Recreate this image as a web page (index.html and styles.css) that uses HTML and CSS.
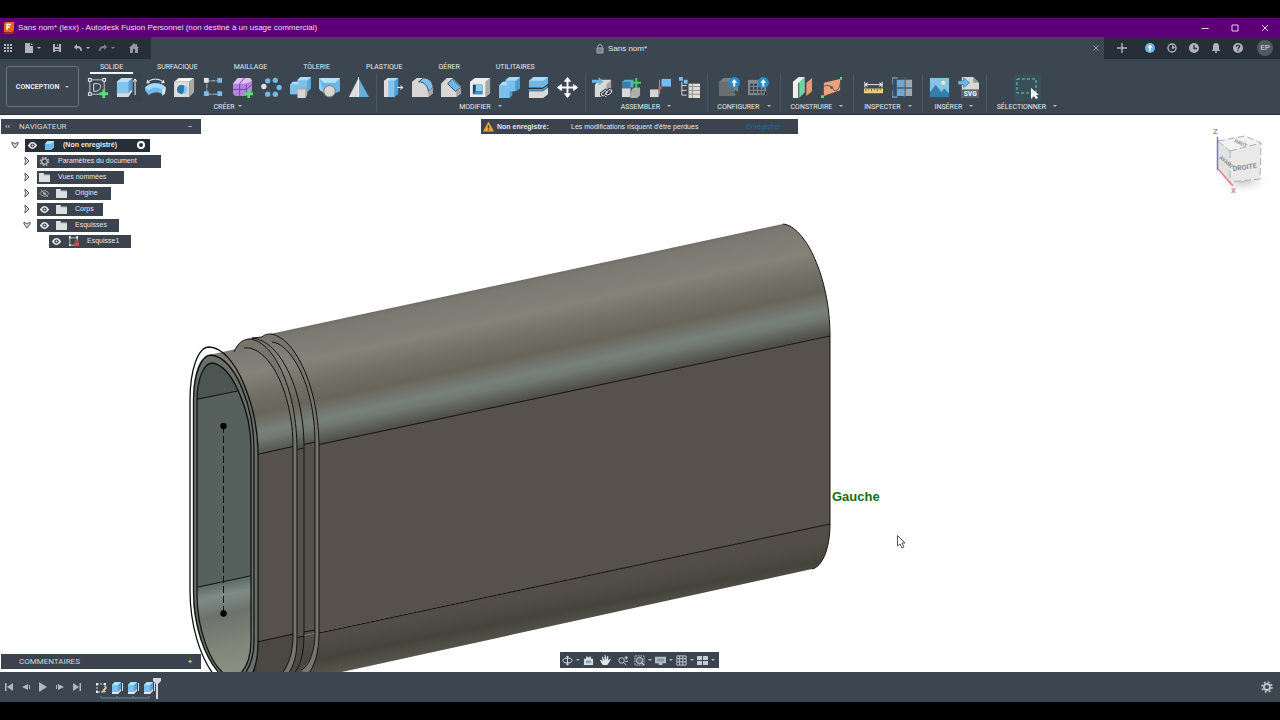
FILE: index.html
```html
<!DOCTYPE html>
<html lang="fr">
<head>
<meta charset="utf-8">
<title>Autodesk Fusion Personnel</title>
<link rel="stylesheet" href="styles.css">
</head>
<body>
<div class="app">
<header class="titlebar">
  <svg class="logo" viewBox="0 0 10 12"><path d="M0 1l2-1h8v10l-2 2H0z" fill="#e8641b"/><path d="M0 10h8l2-2v2l-2 2H0z" fill="#8c3410"/><path d="M3 8V2.500h4M3 5h3" fill="none" stroke="#fff" stroke-width="1.300"/></svg>
  <span class="title">Sans nom* (lexx) - Autodesk Fusion Personnel (non destiné à un usage commercial)</span>
  <div class="window-buttons">
    <button aria-label="Réduire"><svg viewBox="0 0 8 8"><path d="M.5 4.500h7"/></svg></button>
    <button aria-label="Agrandir"><svg viewBox="0 0 8 8"><path d="M1 1h6v6H1z"/></svg></button>
    <button aria-label="Fermer"><svg viewBox="0 0 8 8"><path d="M1 1l6 6M7 1L1 7"/></svg></button>
  </div>
</header>

<div class="tabstrip">
  <div class="quick">
    <button aria-label="Données"><svg viewBox="0 0 10 10"><path d="M1 1h2v2H1zM4 1h2v2H4zM7 1h2v2H7zM1 4h2v2H1zM4 4h2v2H4zM7 4h2v2H7zM1 7h2v2H1zM4 7h2v2H4zM7 7h2v2H7z"/></svg></button>
    <button aria-label="Fichier"><svg viewBox="0 0 10 10"><path d="M1 0h5v3h3v7H1zM7 0l2 2H7z"/></svg><i class="caret"></i></button>
    <button aria-label="Enregistrer le fichier"><svg viewBox="0 0 10 10"><path d="M1 1h8v8H1zM3 1v3h4V1zM3 6v3h4V6z" fill-rule="evenodd"/><path d="M5 1.500h1V3H5zM3 7h4v1H3z"/></svg></button>
    <button aria-label="Annuler"><svg viewBox="0 0 10 10"><path d="M4 1v2c3 0 5 1 5 5H7.500C7.500 6 6.500 5 4 5v2L1 4z"/></svg><i class="caret"></i></button>
    <button class="dim" aria-label="Rétablir"><svg viewBox="0 0 10 10"><path d="M6 1v2C3 3 1 4 1 8h1.500C2.500 6 3.500 5 6 5v2l3-3z"/></svg><i class="caret"></i></button>
    <button class="home" aria-label="Accueil"><svg viewBox="0 0 10 10"><path d="M5 0L0 5h1v5h3V6h2v4h3V5h1L8 3V1H7v1z"/></svg></button>
  </div>
  <div class="doc-tab">
    <span class="doc-name"><svg viewBox="0 0 8 10"><path d="M1 4h6v5H1z" fill="#777f86"/><path d="M2 4V2.500a2 2 0 0 1 4 0V4M1 4h6v5H1z" fill="none" stroke="#a4aab0"/></svg>Sans nom*</span>
    <button class="close" aria-label="Fermer le document"><svg viewBox="0 0 8 8"><path d="M1.500 1.500l5 5M6.500 1.500l-5 5" stroke="#969da4"/></svg></button>
  </div>
  <div class="account">
    <button class="plus" aria-label="Nouveau"><svg viewBox="0 0 10 10"><path d="M4.300 0h1.400v4.300H10v1.400H5.700V10H4.300V5.700H0V4.300h4.300z"/></svg></button>
    <button aria-label="Extensions"><svg viewBox="0 0 10 10"><circle cx="5" cy="5" r="5" fill="#6bb5e6"/><path d="M5 1.500L2.500 4.500h1.800V8.500h1.400V4.500h1.800z" fill="#fff"/></svg></button>
    <button aria-label="Actualiser"><svg viewBox="0 0 10 10"><circle cx="5" cy="5" r="4" fill="none" stroke="#aeb4ba" stroke-width="1.400"/><path d="M4.500 5.500l1-3.500L8 4.500 6 6z"/></svg></button>
    <button aria-label="Historique"><svg viewBox="0 0 10 10"><circle cx="5" cy="5" r="5"/><path d="M5 2v3.500h3" fill="none" stroke="#30383f" stroke-width="1.300"/></svg></button>
    <button aria-label="Notifications"><svg viewBox="0 0 10 10"><path d="M5 0c2 0 3 1.500 3 3.500V6l1.500 2H.5L2 6V3.500C2 1.500 3 0 5 0zM4 8.500h2V10H4z"/></svg></button>
    <button aria-label="Aide"><svg viewBox="0 0 10 10"><circle cx="5" cy="5" r="5"/><path d="M3.300 4c0-2.500 3.400-2.300 3.400-.4C6.700 4.800 5 4.800 5 6.200M5 7v1.300" fill="none" stroke="#262f38" stroke-width="1.300"/></svg></button>
    <button class="avatar">EP</button>
  </div>
</div>

<div class="ribbon">
  <button class="workspace">CONCEPTION <i class="caret"></i></button>
  <div class="ribbon-body">
    <nav class="tabs">
      <button class="active">SOLIDE</button><button>SURFACIQUE</button><button>MAILLAGE</button><button>TÔLERIE</button><button>PLASTIQUE</button><button>GÉRER</button><button>UTILITAIRES</button>
    </nav>
    <div class="groups">
      <section class="group">
        <div class="tools">
          <button aria-label="Créer une esquisse"><svg viewBox="0 0 22 22"><path d="M3 3h15v15H3z" fill="none" stroke="#c8cdd1"/><path d="M1 1h4v4H1zM16 1h4v4h-4zM1 16h4v4H1z" fill="#e4e7e9"/><path d="M2 2h2v2H2zM17 2h2v2h-2zM2 17h2v2H2z" fill="#4a545d"/><path d="M7 15V7h4c4 0 4 4 2 6s-3 2-6 2" fill="none" stroke="#e4e7e9"/><path d="M16 13h3v3h3v3h-3v3h-3v-3h-3v-3h3z" fill="#57dc72"/></svg></button>
          <button class="hot" aria-label="Extrusion"><svg viewBox="0 0 22 22"><path d="M1 5l5-4h11v14l-4 6H1z" fill="#d8dadb"/><path d="M1 5h12v12H1z" fill="#83c5f1"/><path d="M1 5l5-4h11l-4 4z" fill="#b9e0f8"/><path d="M13 5l4-4v12l-4 4z" fill="#4b9bd2"/><path d="M20 19V3M18 5l2-3 2 3" fill="none" stroke="#fff"/></svg></button>
          <button aria-label="Révolution"><svg viewBox="0 0 22 22"><path d="M0 11c5-6 17-6 22 0l-3 8c-4-4-10-4-15 0l-4-5z" fill="#70b9e9"/><path d="M0 11c5-6 17-6 22 0l-4 3c-4-4-10-4-14 0z" fill="#a2d8f8"/><path d="M18 14l4-3-1 6-3 3z" fill="#e4e4e4"/><path d="M2 6c5-5 13-5 18 0M2 6l1-3M2 6h3M20 6l-1-3M20 6h-3" fill="none" stroke="#fff"/></svg></button>
          <button aria-label="Perçage"><svg viewBox="0 0 22 22"><path d="M0 5l5-4h16l-5 4z" fill="#f3f3f2"/><path d="M0 5h16v16H0z" fill="#dad9d7"/><path d="M16 5l5-4v15l-5 5z" fill="#aaa9a7"/><circle cx="8" cy="13" r="5.500" fill="#2e79aa" stroke="#fff"/><path d="M10 8a5 5 0 0 1-2 10c3-2 3-6 2-10z" fill="#82c6ee"/></svg></button>
          <button aria-label="Réseau"><svg viewBox="0 0 22 22"><path d="M4 18V4h13M4 18h13" fill="none" stroke="#b9c1c6" stroke-dasharray="5 1"/><path d="M1 1h5v5H1z" fill="#e3e3e3"/><path d="M15 1h5v5h-5zM1 15h5v5H1zM15 15h5v5h-5z" fill="#79bce8"/></svg></button>
          <button aria-label="Forme libre"><svg viewBox="0 0 22 22"><path d="M1 7l5-6h13l2 3v11l-6 5H3l-2-3z" fill="#b383df"/><path d="M1 7l5-6h13l2 3-6 3z" fill="#dfbdf7"/><path d="M15 7v13M1 13h14l6-5M8 20V7l5-6" fill="none" stroke="#7846a3"/><path d="M16 13h3v3h3v3h-3v3h-3v-3h-3v-3h3z" fill="#57dc72"/></svg></button>
          <button aria-label="Réseau circulaire"><svg viewBox="0 0 22 22"><g fill="#73b8e5"><circle cx="7" cy="4" r="2.800"/><circle cx="15" cy="3.500" r="2.800"/><circle cx="19" cy="11" r="2.800"/><circle cx="15" cy="18" r="2.800"/><circle cx="7" cy="18" r="2.800"/></g><circle cx="3" cy="10" r="2.800" fill="#e0e0df"/></svg></button>
          <button aria-label="Bossage"><svg viewBox="0 0 22 22"><path d="M0 8l3-3h5V3l3-3h11v12l-4 4H8v2H0z" fill="#55a7dc"/><path d="M0 8l3-3h5V3l3-3h11l-4 4H9v4z" fill="#acddf9"/><path d="M0 8h9V4h9v12H8v2H0z" fill="#7cc0ec"/><path d="M8 13l2-2h8v8l-2 3H8z" fill="#aaa9a6"/><path d="M8 13h8v9H8z" fill="#d7d6d3"/></svg></button>
          <button aria-label="Nervure"><svg viewBox="0 0 22 22"><path d="M0 1h22v14l-5 2H5l-5-5z" fill="#6cb6e7"/><path d="M0 1h22l-5 5H5z" fill="#b8e2fb"/><path d="M0 1l5 14H2l-2-3z" fill="#94d0f5"/><circle cx="11" cy="15" r="6" fill="#d7d6d3" stroke="#777"/></svg></button>
          <button aria-label="Symétrie"><svg viewBox="0 0 22 22"><path d="M11 1v20H1z" fill="#ddddda"/><path d="M11 1v20h11z" fill="#65afe0"/><path d="M11 0v21" stroke="#f7f7f7"/></svg></button>
        </div>
        <button class="label">CRÉER <i class="caret"></i></button>
      </section>
      <section class="group">
        <div class="tools">
          <button aria-label="Appuyer/Tirer"><svg viewBox="0 0 22 22"><path d="M1 4l4-3h5v17l-4 3H1z" fill="#ddd"/><path d="M6 4l4-3h6v17l-4 3H6z" fill="#4d9dd4"/><path d="M6 4h6v17H6z" fill="#80c4f1"/><path d="M6 4l4-3h6l-4 3z" fill="#b2e0fa"/><path d="M15 11h6M18 9l3 2-3 2" stroke="#fff" fill="none"/></svg></button>
          <button aria-label="Congé"><svg viewBox="0 0 22 22"><path d="M0 5l5-4h8c6 0 9 6 9 10v6l-5 4H0z" fill="#d7d6d4"/><path d="M12 1c6 0 10 5 10 10l-5 4c0-5-4-10-10-10z" fill="#7bc1ef" stroke="#334958"/><path d="M17 15l5-4v6l-5 4z" fill="#a6a5a2"/></svg></button>
          <button aria-label="Chanfrein"><svg viewBox="0 0 22 22"><path d="M0 7l6-6h6l9 9v7l-5 4H0z" fill="#d8d7d5"/><path d="M12 2l9 9-6 4-8-8z" fill="#70b7ea" stroke="#334958"/><path d="M16 15l5-4v6l-5 4z" fill="#a6a5a2"/></svg></button>
          <button aria-label="Coque"><svg viewBox="0 0 22 22"><path d="M0 5l5-4h16v16l-5 4H0z" fill="#edeceb"/><path d="M16 5l5-4v16l-5 4z" fill="#aaa9a6"/><path d="M3 8h10v10H3z" fill="#17486e"/><path d="M6 8h7v7H6z" fill="#8dccf2"/><path d="M3 18l3-3h7v3z" fill="#438ec1"/></svg></button>
          <button aria-label="Combiner"><svg viewBox="0 0 22 22"><path d="M0 9l4-4h3V3l4-3h11v12l-4 3h-4v4l-3 3H0z" fill="#4a9cd3"/><path d="M0 9h7V4h10v11h-6v7H0z" fill="#7bc0ec"/><path d="M0 9l4-4h3V3l4-3h11l-4 4H8v5z" fill="#abdcf9"/></svg></button>
          <button aria-label="Fractionner"><svg viewBox="0 0 22 22"><path d="M1 4l5-4h15v7l-5 4H1z" fill="#70b7e6"/><path d="M1 4l5-4h15l-5 4z" fill="#a8dcf9"/><path d="M0 12h15l6-4v3l-5 4H0z" fill="#4d9acf" stroke="#25313b"/><path d="M1 15h15l5-4v7l-5 4H1z" fill="#dbdad8"/></svg></button>
          <button aria-label="Déplacer"><svg viewBox="0 0 22 22"><path d="M11 1v20M1 11h20" stroke="#fff" stroke-width="2"/><path d="M11 0l4 5H7zM11 22l-4-5h8zM0 11l5-4v8zM22 11l-5-4v8z" fill="#fff"/></svg></button>
        </div>
        <button class="label">MODIFIER &nbsp; <i class="caret"></i></button>
      </section>
      <section class="group">
        <div class="tools">
          <button aria-label="Insérer un composant"><svg viewBox="0 0 22 22"><path d="M3 8l5-5h12v13l-5 5H3z" fill="#dad9d7"/><path d="M15 8l5-5v13l-5 5z" fill="#a4a39f"/><path d="M0 3h7V0l5 5-5 4V6H0z" fill="#68b5e7"/><path d="M10 17l4-3 2 2-4 4-2-1zM14 17l4-4 3 1-1 3-4 2z" fill="none" stroke="#2d3640" stroke-width="3"/><path d="M10 17l4-3 2 2-4 4-2-1zM14 17l4-4 3 1-1 3-4 2z" fill="none" stroke="#fff"/></svg></button>
          <button aria-label="Nouveau composant"><svg viewBox="0 0 22 22"><path d="M1 5l3-2h9v8H1z" fill="#60abd9"/><path d="M1 11h9v10H1z" fill="#dadad8"/><path d="M11 13l3-2h6v8l-3 3h-7z" fill="#b0afad"/><path d="M1 5h9v7H1z" fill="#397eac"/><path d="M16 1v10M11 6h10" stroke="#39d663" stroke-width="2"/></svg></button>
          <button aria-label="Liaison"><svg viewBox="0 0 22 22"><path d="M0 13h9v8H0z" fill="#d7d5d2"/><path d="M12 2h10v8H12z" fill="#75bcee"/><path d="M10 3v15" stroke="#9aa0a3"/><path d="M9 10h3v3H9z" fill="#ec5860"/></svg></button>
          <button aria-label="Nomenclature"><svg viewBox="0 0 22 22"><path d="M0 0h4v4H0zM5 3h4v4H5z" fill="#7abceb"/><path d="M3 5v14h5M3 9h5M3 14h5" fill="none" stroke="#ddd"/><path d="M10 7h12v15H10z" fill="#deddda"/><path d="M10 10h12M10 14h12M10 18h12M14 7v15" stroke="#8c9092"/></svg></button>
        </div>
        <button class="label">ASSEMBLER &nbsp; <i class="caret"></i></button>
      </section>
      <section class="group wide">
        <div class="tools">
          <button aria-label="Configurer"><svg viewBox="0 0 22 22"><path d="M0 5l5-4h15v15l-4 4H0z" fill="#7d8184"/><path d="M0 5h16v15H0z" fill="#696e72"/><path d="M13 16h7M17 14l3 2-3 2" stroke="#4d5860"/><circle cx="16" cy="6" r="6" fill="#258dce"/><path d="M16 2l-3 4h2v4h2V6h2z" fill="#fff"/></svg></button>
          <button aria-label="Table de configuration"><svg viewBox="0 0 22 22"><path d="M0 3h19v16H0z" fill="#858b90"/><path d="M2 7h15v10H2z" fill="#3d4751"/><path d="M2 10h15M2 14h15M6 7v10M10 7v10M14 7v10" stroke="#8b9196"/><path d="M12 18h9M18 15l3 3-3 2" stroke="#59636b"/><circle cx="16" cy="6" r="6" fill="#258dce"/><path d="M16 2l-3 4h2v4h2V6h2z" fill="#fff"/></svg></button>
        </div>
        <button class="label">CONFIGURER &nbsp; <i class="caret"></i></button>
      </section>
      <section class="group wide">
        <div class="tools">
          <button aria-label="Plan de décalage"><svg viewBox="0 0 22 22"><path d="M1 5l6-5h6v16l-6 6H1z" fill="#efefec"/><path d="M7 6l6-6v16l-6 6z" fill="#6ad7a0"/><path d="M7 6v16" stroke="#25594a"/><path d="M15 6l6-5v14l-6 5z" fill="#e59a70"/></svg></button>
          <button aria-label="Plan le long d'un chemin"><svg viewBox="0 0 22 22"><path d="M3 6l17-4v12L3 20z" fill="#e9a27c"/><path d="M1 20C1 2 12 10 13 13s7 2 8-11" fill="none" stroke="#55504b"/><path d="M0 19h3v3H0zM20 0h2v3h-2z" fill="#65dc7a"/><circle cx="11" cy="11" r="1.500" fill="#347a45"/></svg></button>
        </div>
        <button class="label">CONSTRUIRE &nbsp; <i class="caret"></i></button>
      </section>
      <section class="group mid">
        <div class="tools">
          <button aria-label="Mesurer"><svg viewBox="0 0 22 22"><path d="M1 12h20v5H1z" fill="#efd07a"/><path d="M3 12v3M6 12v2M9 12v3M12 12v2M15 12v3M18 12v2" stroke="#705d27"/><path d="M2 8h18M2 5v6M20 5v6M5 6L2 8l3 2M17 6l3 2-3 2" fill="none" stroke="#f3f4f4"/></svg></button>
          <button aria-label="Interférence"><svg viewBox="0 0 22 22"><path d="M5 3h8v8H5zM5 12h8v8H5z" fill="#6fa6cf"/><path d="M13 3h8v8h-8zM13 12h8v8h-8z" fill="#a4a8ac"/><path d="M4 1H2v20h2M11 1h3v20h-3M5 11.500h16" fill="none" stroke="#35699a"/><path d="M0 8V1h6M0 14v7h6" fill="none" stroke="#85bdda"/></svg></button>
        </div>
        <button class="label">INSPECTER &nbsp; <i class="caret"></i></button>
      </section>
      <section class="group">
        <div class="tools">
          <button aria-label="Insérer une image"><svg viewBox="0 0 22 22"><path d="M1 1h20v20H1z" fill="#83c3e8"/><circle cx="15" cy="6" r="2.200" fill="#fff2ae"/><path d="M1 16l6-8 6 8 3-4 5 5v4H1z" fill="#347dac"/></svg></button>
          <button aria-label="Insérer un SVG"><svg viewBox="0 0 22 22"><path d="M4 0h12l6 6v16H4z" fill="#d6d7d7"/><path d="M16 0v6h6z" fill="#91969b"/><path d="M4 13h18v9H4z" fill="#596069"/><path d="M0 4h6V1l6 5-6 5V8H0z" fill="#6bbaec" stroke="#2c526b" stroke-width=".6"/><text x="6" y="20" class="svg-word">SVG</text></svg></button>
        </div>
        <button class="label">INSÉRER &nbsp; <i class="caret"></i></button>
      </section>
      <section class="group last">
        <div class="tools">
          <button class="selected" aria-label="Sélectionner"><svg viewBox="0 0 26 24"><path d="M3 3h19v14H3z" fill="none" stroke="#62ceb0" stroke-dasharray="3 2"/><path d="M17 12v11l3-3 2 3 2-1-2-3h3z" fill="#fff"/></svg></button>
        </div>
        <button class="label">SÉLECTIONNER &nbsp; <i class="caret"></i></button>
      </section>
    </div>
  </div>
</div>

<main class="canvas">
  <svg class="scene" viewBox="0 115 1280 557" preserveAspectRatio="xMinYMin slice">
    <defs>
      <linearGradient id="top" gradientUnits="userSpaceOnUse" x1="0" y1="391" x2="25" y2="507">
        <stop offset="0" stop-color="#6b6b65"/><stop offset=".05" stop-color="#7a7871"/><stop offset=".3" stop-color="#858279"/><stop offset=".5" stop-color="#716e64"/><stop offset=".64" stop-color="#68665b"/><stop offset=".8" stop-color="#78807a"/><stop offset=".86" stop-color="#727973"/><stop offset="1" stop-color="#504f48"/>
      </linearGradient>
      <linearGradient id="low" gradientUnits="userSpaceOnUse" x1="0" y1="700" x2="8" y2="741">
        <stop offset="0" stop-color="#524e47"/><stop offset=".5" stop-color="#45443c"/><stop offset=".85" stop-color="#55544a"/><stop offset="1" stop-color="#6a695f"/>
      </linearGradient>
      <linearGradient id="hole" gradientUnits="userSpaceOnUse" x1="200" y1="584" x2="218" y2="672">
        <stop offset="0" stop-color="#57625f"/><stop offset=".17" stop-color="#7f8b88"/><stop offset=".38" stop-color="#6d736c"/><stop offset=".75" stop-color="#81857a"/><stop offset="1" stop-color="#8b8e83"/>
      </linearGradient>
      <radialGradient id="shade"><stop offset="0" stop-color="#aaa" stop-opacity=".7"/><stop offset="1" stop-color="#fff" stop-opacity="0"/></radialGradient>
      <clipPath id="opening"><path id="open-path" d="M197 400C197 379 204 363 212 363C232 365 251 411 251 448V640C251 655 247 668 239 675H226C210 665 197 628 197 595z"/></clipPath>
      <clipPath id="body"><path d="M262 337L270 334L783 224C805 226 830 277 830 336V524C830 549 822 567 812 569L310 679H283L236 675V352C240 342 246 338 254 338z"/></clipPath>
    </defs>

    <path d="M209 355L236 349L260 380V672H220z" fill="url(#top)"/>
    <g clip-path="url(#body)">
      <path d="M180 200H840V334L180 474z" fill="url(#top)"/>
      <path d="M180 473.500L840 334V522L180 662z" fill="#56524b"/>
      <path d="M180 662L840 522V690H180z" fill="url(#low)"/>
      <path d="M257 454.500L293 446.500L297 449.500L304 448V636L297 637.500L293 634L257 642z" fill="#56524b"/>
      <path d="M257 642L293 634L297 637.500L304 636V676H257z" fill="#4a4840"/>
    </g>
    <path d="M319 444.500L830 336M319 633L830 524M783 224C805 226 830 277 830 336V524C830 549 822 567 812 569" class="edge"/>

    <path d="M262 337C265 334 268 334 271 334C296 338 319 389 319 447V633C319 652 315 666 307 676L301 670C309 664 315 650 315 633V443C315 382 289 343 272 342z" fill="#77756b"/>
    <path d="M262 337C265 334 268 334 271 334C296 338 319 389 319 447V633C319 652 315 666 307 676M272 342C289 343 315 382 315 443V633C315 650 309 667 301 670M252 338C282 341 304 393 304 447V633C304 654 301 665 293 675M252 338L262 337" class="edge"/>
    <path d="M234 352C238 342 244 339 250 339C276 342 297 394 297 449V637C297 654 295 665 287 675H281C289 665 293 652 293 635V447C293 392 270 349 248 347L236 350z" fill="#77756b"/>
    <path d="M234 352C238 342 244 339 250 339C276 342 297 394 297 449V637C297 654 295 665 287 675M244 348C268 345 293 391 293 447V635C293 652 289 665 281 675" class="edge"/>
    <path d="M257 454.500L293 446.500M297 449.500L304 448M304 444.500L315 442M257 642L293 634M297 637.500L304 636M304 632L315 630" class="edge"/>

    <path d="M193 400C193 371 200 355 211 355C238 358 258 409 258 454V642C258 654 256 668 250 675H222C205 660 193 628 193 595z" fill="#68716b"/>
    <use href="#open-path" fill="#56615d"/>
    <g clip-path="url(#opening)">
      <path d="M190 355h70v31L190 401z" fill="#4c5552"/>
      <path d="M190 589L260 574V675H190z" fill="url(#hole)"/>
      <path d="M196 399.500L240 390.500M196 587.500L252 575.500" class="edge"/>
    </g>
    <use href="#open-path" class="edge heavy"/>
    <path d="M190 400C190 370 198 347 209 347C236 348 258 408 258 454V642C258 655 256 666 252 675M190 399V590C190 625 200 657 214 675M193.500 399C194 372 202 355 211 355C236 358 254 408 254 450V642C254 655 250 667 244 675M193.500 399V592C194 625 204 658 221 675" class="edge heavy"/>
    <path d="M223.500 426V613" class="edge axis"/>
    <circle cx="223.500" cy="426" r="3.200"/><circle cx="223.500" cy="613.500" r="3.200"/>

    <text x="832" y="501" class="side-name">Gauche</text>
    <path d="M897.500 535.500v10.500l2.500-2 2 4 2-1-2-4h3z" fill="#fff" stroke="#555"/>

    <ellipse cx="1243" cy="181" rx="29" ry="13" fill="url(#shade)"/>
    <path d="M1218 141L1245 136L1261 143L1260 179L1230 182L1218 170z" fill="#f2f2f2"/>
    <path d="M1218 141L1230 151V182L1218 170z" fill="#e1e2e4"/>
    <path d="M1230 151L1261 143L1260 179L1230 182z" fill="#e9e9e9"/>
    <path d="M1218 141L1245 136L1261 143L1260 179L1230 182M1230 151L1261 143M1230 151V182M1218 141L1230 151" fill="none" stroke="#b0b0b0" stroke-dasharray="7 3"/>
    <path d="M1217.500 137V170" stroke="#7772ce" stroke-width="1.500"/><path d="M1218 169L1233 186" stroke="#df7f85" stroke-width="1.500"/>
    <text x="1213" y="134" class="cube-text z">Z</text><text x="1231" y="193" class="cube-text x">X</text>
    <text transform="translate(1233 171) rotate(-7)" class="cube-text face">DROITE</text>
    <text transform="translate(1234 142) rotate(24)" class="cube-text tiny">HAUT</text>
    <text transform="translate(1219 158) rotate(40)" class="cube-text tiny">AVANT</text>
  </svg>

  <div class="warning">
    <svg viewBox="0 0 12 11"><path d="M6 0l6 11H0z" fill="#efa33d"/><path d="M6 4v3M6 8v1.500" stroke="#343d46" stroke-width="1.500"/></svg>
    <strong>Non enregistré:</strong><span>Les modifications risquent d'être perdues</span><a href="#">Enregistrer</a>
  </div>

  <aside class="side">
    <div class="panel-title"><button aria-label="Replier">‹‹</button><span>NAVIGATEUR</span><button aria-label="Masquer">−</button></div>
    <ul class="tree">
      <li class="root"><button class="twist" aria-label="Replier la racine"><svg viewBox="0 0 8 8"><path d="M1 1l3 2 3-2v2L4 7 1 3z"/></svg></button><div class="node w125"><svg class="eye" viewBox="0 0 12 12"><use href="#eye"/></svg><svg viewBox="0 0 12 12"><path d="M1 4l3-3h7v7l-3 3H1z" fill="#6cb9ea"/><path d="M1 4l3-3h7L8 4z" fill="#b8e2fa"/></svg><b>(Non enregistré)</b><svg class="radio" viewBox="0 0 12 12"><circle cx="6" cy="6" r="3" fill="none" stroke="#fff" stroke-width="2"/></svg></div></li>
      <li><button class="twist" aria-label="Développer"><svg viewBox="0 0 8 8"><use href="#right"/></svg></button><div class="node w124"><svg viewBox="0 0 12 12"><circle cx="6" cy="6" r="3" fill="none" stroke="#aeb5bb" stroke-width="1.500"/><circle cx="6" cy="6" r="4.500" fill="none" stroke="#aeb5bb" stroke-width="1.500" stroke-dasharray="1.800 1.730"/></svg><span class="far">Paramètres du document</span></div></li>
      <li><button class="twist" aria-label="Développer"><svg viewBox="0 0 8 8"><use href="#right"/></svg></button><div class="node w87"><svg viewBox="0 0 12 12"><use href="#folder"/></svg><span class="far">Vues nommées</span></div></li>
      <li><button class="twist" aria-label="Développer"><svg viewBox="0 0 8 8"><use href="#right"/></svg></button><div class="node w74"><svg viewBox="0 0 12 12"><path d="M1 6c3-4 7-4 10 0-3 4-7 4-10 0zM2 2l8 8" fill="none" stroke="#aeb5bb"/><circle cx="6" cy="6" r="1.500" fill="#aeb5bb"/></svg><svg class="second" viewBox="0 0 12 12"><use href="#folder"/></svg><span>Origine</span></div></li>
      <li><button class="twist" aria-label="Développer"><svg viewBox="0 0 8 8"><use href="#right"/></svg></button><div class="node w66"><svg viewBox="0 0 12 12"><use href="#eye"/></svg><svg class="second" viewBox="0 0 12 12"><use href="#folder"/></svg><span>Corps</span></div></li>
      <li><button class="twist" aria-label="Replier"><svg viewBox="0 0 8 8"><path d="M1 1l3 2 3-2v2L4 7 1 3z"/></svg></button><div class="node w82"><svg viewBox="0 0 12 12"><use href="#eye"/></svg><svg class="second" viewBox="0 0 12 12"><use href="#folder"/></svg><span>Esquisses</span></div></li>
      <li class="leaf"><div class="node w82"><svg viewBox="0 0 12 12"><use href="#eye"/></svg><svg class="second" viewBox="0 0 12 12"><path d="M2 1v9h5M2 2h8v4" fill="none" stroke="#c3c8cc"/><path d="M1 0h2v3H1zM9 0h2v3H9zM1 9h2v2H1z" fill="#ddd"/><path d="M7 7h5v4H7z" fill="#d44954"/><path d="M8 7V5h3v2" fill="none" stroke="#d44954"/></svg><span>Esquisse1</span></div></li>
    </ul>
  </aside>
  <div class="panel-title comments"><span>COMMENTAIRES</span><button aria-label="Afficher">+</button></div>

  <div class="viewbar">
    <button aria-label="Orbite"><svg viewBox="0 0 12 12"><path d="M6 1v10" stroke="#d7dde1"/><ellipse cx="6" cy="6" rx="5" ry="2.500" fill="none" stroke="#d7dde1"/><path d="M4 3l2-2 2 2M4 9l2 2 2-2" fill="none" stroke="#d7dde1"/></svg></button><i class="caret"></i>
    <button aria-label="Regarder"><svg viewBox="0 0 12 12"><path d="M1 4h2l1-3 2 2 2-2 1 3h2v7H1z" fill="#d7dde1"/><path d="M3 6h6v3H3z" fill="#82aabf"/></svg></button>
    <button aria-label="Panoramique"><svg viewBox="0 0 12 12"><path d="M3 11L0 6l1-1 2 2-1-5h1l2 4V0h1l1 5 1-4h1v5l2-2h1l-2 4-2 3z" fill="#e0e5e8"/></svg></button>
    <button aria-label="Zoom"><svg viewBox="0 0 12 12"><circle cx="5" cy="6" r="3" fill="none" stroke="#d2d8dc"/><path d="M7 8l3 3M8 3h4M10 1v4M9 7h3" stroke="#d2d8dc"/></svg></button>
    <button aria-label="Ajuster"><svg viewBox="0 0 12 12"><path d="M1 1h10v10H1z" fill="none" stroke="#c5cbd0" stroke-dasharray="2 1"/><circle cx="6" cy="6" r="3.500" fill="#616c75" stroke="#ccd2d6"/><path d="M8 8l3 3" stroke="#fff"/></svg></button><i class="caret"></i>
    <button aria-label="Affichage"><svg viewBox="0 0 12 12"><path d="M0 2h12v7H0zM4 9h4v2H4z" fill="#b4bdc4"/><path d="M2 4h8v3H2z" fill="#849aa9"/></svg></button><i class="caret"></i>
    <button aria-label="Grille"><svg viewBox="0 0 12 12"><path d="M1 1h10v10H1zM1 4h10M1 7.500h10M4 1v10M7.500 1v10" fill="none" stroke="#cbd1d6"/></svg></button><i class="caret"></i>
    <button aria-label="Fenêtres"><svg viewBox="0 0 12 12"><path d="M0 1h5.500v4.500H0zM6.500 1H12v4.500H6.500zM0 6.500h5.500V11H0zM6.500 6.500H12V11H6.500z" fill="#c5cbd0"/></svg></button><i class="caret"></i>
  </div>
</main>

<footer class="timeline">
  <div class="play">
    <button aria-label="Début"><svg viewBox="0 0 10 10"><path d="M1 1h1.500v8H1zM9 1v8L3 5z"/></svg></button>
    <button aria-label="Précédent"><svg viewBox="0 0 10 10"><path d="M7 2v6L1 5zM8 3h1v4H8z"/></svg></button>
    <button aria-label="Lecture"><svg viewBox="0 0 10 10"><path d="M1 0l8 5-8 5z"/></svg></button>
    <button aria-label="Suivant"><svg viewBox="0 0 10 10"><path d="M3 2v6l6-3zM1 3h1v4H1z"/></svg></button>
    <button aria-label="Fin"><svg viewBox="0 0 10 10"><path d="M1 1v8l6-4zM7.500 1H9v8H7.500z"/></svg></button>
  </div>
  <svg class="history" viewBox="0 0 80 30">
    <g id="sketch-step"><path d="M7 12h8v8H7z" fill="none" stroke="#d7dbde" stroke-dasharray="2 1"/><path d="M6 11h2v2H6zM14 11h2v2h-2zM6 19h2v2H6z" fill="#e8ebed"/><path d="M12 19l4-5 1 2-4 5z" fill="#e6c88e"/></g>
    <g id="step"><path d="M22 13l3-3h6v9l-3 3h-6z" fill="#e3e8ed"/><path d="M22 13h6v7h-6z" fill="#79c2f1"/><path d="M22 13l3-3h6l-3 3z" fill="#b6e1fb"/><path d="M28 13l3-3v7l-3 3z" fill="#4fa1d8"/><path d="M32.500 11v8" stroke="#ddd"/></g>
    <use href="#step" x="16"/><use href="#step" x="32"/>
    <path d="M11 24v2h48v-2M27 24v2M43 24v2" fill="none" stroke="#6c8498"/>
    <path d="M63 6h8v3l-3 3v15h-2V12l-3-3z" fill="#d4d9dd"/>
  </svg>
  <button class="settings" aria-label="Paramètres"><svg viewBox="0 0 12 12"><circle cx="6" cy="6" r="3" fill="none" stroke="#bbc2c8" stroke-width="2"/><circle cx="6" cy="6" r="5" fill="none" stroke="#bbc2c8" stroke-width="1.500" stroke-dasharray="2 1.927"/></svg></button>
</footer>
</div>
<svg class="symbols" aria-hidden="true"><defs>
  <g id="eye"><path d="M1 6c3-5 7-5 10 0-3 5-7 5-10 0z" fill="#e8ebed"/><circle cx="6" cy="6" r="2.300" fill="#303942"/><circle cx="6" cy="6" r="1" fill="#e8ebed"/></g>
  <g id="folder"><path d="M0 1h5l1 2h6v8H0z" fill="#dcdfe1"/><path d="M5 3h7" stroke="#8a9197"/></g>
  <path id="right" d="M2 0l4 4-4 4V6l1-2-1-2z"/>
</defs></svg>
</body>
</html>
```
FILE: styles.css
```css
* { box-sizing: border-box; }
body {
  margin: 0;
  padding: 18px 0;
  background: #000;
  color: #e6e9eb;
  font: 7px/12px "Liberation Sans", Arial, sans-serif;
}
button { margin: 0; padding: 0; border: 0; background: none; color: inherit; font: inherit; }
svg { display: block; flex: none; }
.symbols { display: none; }
.app { display: flex; flex-direction: column; min-height: calc(100vh - 36px); }
.caret {
  flex: none;
  display: inline-block;
  border: 2px solid transparent;
  border-top-color: #b3bac0;
  border-bottom: 0;
  vertical-align: middle;
}

.titlebar {
  display: flex;
  align-items: center;
  height: 19px;
  padding-left: 4px;
  background: #5d0078;
  color: #f3def8;
  font-size: 8px;
}
.logo { width: 10px; height: 12px; margin-right: 4px; }
.window-buttons { display: flex; margin-left: auto; }
.window-buttons button { display: grid; place-items: center; width: 30px; height: 19px; }
.window-buttons svg { width: 8px; height: 8px; fill: none; stroke: #edc7f6; }

.tabstrip { display: flex; height: 22px; background: #262f38; fill: #aeb4ba; }
.tabstrip svg { width: 10px; height: 10px; }
.quick { display: flex; align-items: center; width: 151px; padding-left: 3px; gap: 11px; }
.quick button { display: flex; align-items: center; gap: 3px; }
.quick .dim { opacity: .6; margin-left: -3px; }
.quick .home { opacity: .8; margin-left: 3px; }
.doc-tab { flex: 1; display: flex; align-items: center; background: #3c4650; }
.doc-name { flex: 1; display: flex; justify-content: center; align-items: center; gap: 4px; padding-top: 2px; font-size: 8px; }
.doc-tab svg { width: 8px; }
.close { margin-right: 4px; }
.account { display: flex; align-items: center; padding: 0 7px 0 13px; gap: 12px; }
.account .plus { margin-right: 6px; }
.avatar { width: 16px; height: 16px; margin-left: 2px; border-radius: 8px; background: #505963; color: #d6dbdf; font: 8px/16px Roboto, sans-serif; }

.ribbon {
  display: flex;
  height: 56px;
  padding-left: 6px;
  background: #3c4650;
  border-bottom: 1px solid #26313a;
  font: 7px/10px Roboto, "Liberation Sans", sans-serif;
}
.workspace { width: 73px; height: 41px; margin-top: 7px; border: 1px solid #69737c; border-radius: 3px; font-weight: 700; }
.workspace .caret { margin-left: 4px; }
.ribbon-body { padding-left: 2px; }
.tabs { display: flex; gap: 36px; height: 15px; padding-left: 9px; }
.tabs button { height: 15px; }
.tabs .active { width: 43px; margin-right: -12px; border-bottom: 2px solid #f2f3f4; padding-top: 2px; }
.groups { display: flex; }
.group { height: 38px; padding: 0 3px 0 2px; border-right: 1px solid #4d5761; display: flex; flex-direction: column; align-items: center; justify-content: space-between; }
.wide { padding: 0 7px; }
.mid { padding: 0 5px; }
.last { width: 81px; border: 0; }
.tools { display: flex; }
.tools button { display: grid; place-items: center; width: 29px; height: 27px; }
.tools svg { width: 21px; height: 21px; }
.tools .hot { background: #39434e; }
.tools .selected { width: 27px; background: #3a5059; }
.tools .selected svg { width: 26px; height: 24px; }
.label { height: 10px; white-space: nowrap; }
.label .caret { margin: -2px 0 0 2px; }
.svg-word { font: 700 7px Roboto, sans-serif; fill: #fff; }

.canvas { position: relative; flex: 1; min-height: 557px; background: #fff; overflow: hidden; }
.scene { position: absolute; inset: 0; width: 100%; height: 100%; }
.edge { fill: none; stroke: #11130f; stroke-width: 1; }
.heavy { stroke-width: 1.3; }
.axis { stroke-dasharray: 7 3; }
.side-name { font: 700 13px "Liberation Sans", Arial, sans-serif; fill: #107010; }
.cube-text { font: 700 8px Roboto, sans-serif; fill: #898989; }
.face { font-size: 7px; }
.tiny { font-size: 5px; }
.z { fill: #8d88da; }
.x { fill: #e9878d; }

.warning {
  position: absolute;
  top: 4px;
  left: 481px;
  display: flex;
  align-items: center;
  width: 317px;
  height: 15px;
  padding-left: 2px;
  background: #3a434e;
}
.warning svg { width: 11px; height: 11px; margin-right: 3px; }
.warning strong { width: 74px; }
.warning a { margin-left: 48px; color: #216c9e; text-decoration: none; }

.side { position: absolute; top: 4px; left: 1px; width: 200px; }
.panel-title { display: flex; align-items: center; height: 15px; background: #3a434e; color: #d3d8dc; font: 8px/15px Roboto, sans-serif; }
.panel-title span { flex: 1; padding-left: 18px; }
.panel-title button { width: 22px; color: #e6e9eb; }
.panel-title button:first-child { width: 13px; }
.panel-title button:first-child + span { padding-left: 5px; }
.comments { position: absolute; left: 1px; bottom: 3px; width: 200px; }
.tree { margin: 3px 0 0; padding: 0; list-style: none; }
.tree li { display: flex; align-items: center; height: 16px; padding-left: 22px; }
.tree .root { padding-left: 10px; }
.tree .leaf { padding-left: 48px; }
.twist { width: 14px; }
.twist svg { width: 8px; height: 8px; fill: #ddd; stroke: #555; }
.node { display: flex; align-items: center; height: 13px; padding-left: 2px; background: #3a434e; }
.node svg { width: 11px; height: 11px; }
.node .second { margin: 0 8px 0 6px; }
.node span, .node b { white-space: nowrap; }
.node .far { margin-left: 8px; }
.root .node { background: #262f38; }
.root .eye { margin-right: 6px; }
.root b { flex: 1; padding-left: 8px; }
.root .radio { width: 12px; height: 12px; margin-right: 3px; }
.w125 { width: 125px; }
.w124 { width: 124px; }
.w87 { width: 87px; }
.w82 { width: 82px; }
.w74 { width: 74px; }
.w66 { width: 66px; }

.viewbar { position: absolute; left: 560px; bottom: 4px; display: flex; align-items: center; gap: 3px; width: 159px; height: 16px; padding: 0 2px; background: #3a434e; }
.viewbar svg { width: 11px; height: 11px; }
.viewbar button + button { margin-left: 3px; }

.timeline { display: flex; align-items: center; height: 30px; padding: 0 7px 0 4px; background: #3c4650; }
.play { display: flex; gap: 7px; fill: #b0b7be; }
.play svg { width: 10px; height: 10px; }
.history { width: 80px; height: 30px; margin-left: 8px; }
.settings { margin-left: auto; }
.settings svg { width: 12px; height: 12px; }
```
